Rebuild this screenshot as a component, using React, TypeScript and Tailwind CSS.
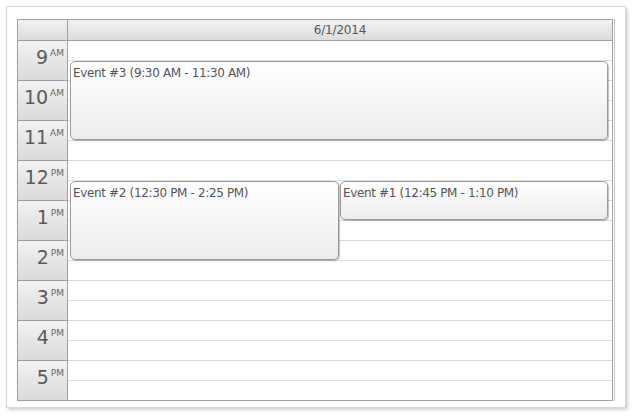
import React from "react";

const hours = [
  { h: "9", ap: "AM" },
  { h: "10", ap: "AM" },
  { h: "11", ap: "AM" },
  { h: "12", ap: "PM" },
  { h: "1", ap: "PM" },
  { h: "2", ap: "PM" },
  { h: "3", ap: "PM" },
  { h: "4", ap: "PM" },
  { h: "5", ap: "PM" },
];

// events placed on the day canvas (px offsets from top of the first hour line)
const events = [
  { text: "Event #3 (9:30 AM - 11:30 AM)", top: 21, left: 2, width: 538, height: 79 },
  { text: "Event #2 (12:30 PM - 2:25 PM)", top: 141, left: 2, width: 269, height: 79 },
  { text: "Event #1 (12:45 PM - 1:10 PM)", top: 141, left: 272, width: 268, height: 39 },
];

export default function App() {
  return (
    <div
      className="w-[636px] h-[420px] bg-white pt-[6px] pl-[6px]"
      style={{ fontFamily: '"DejaVu Sans", Verdana, sans-serif' }}
    >
      <div className="w-[620px] h-[402px] border border-[#d6d6d6] bg-white shadow-[2px_2px_3px_rgba(0,0,0,0.18)] pt-[12px] pl-[10px]">
        <div className="w-[598px] border-r border-[#c4c4c4]">
          <div className="w-[596px] border border-[#a0a0a0] flex flex-col">
            {/* header */}
            <div className="flex h-[20px]">
              <div className="w-[50px] border-r border-[#a0a0a0] bg-gradient-to-b from-[#f2f2f2] to-[#dcdcdc]" />
              <div className="flex-1 bg-gradient-to-b from-[#f2f2f2] to-[#dcdcdc] flex items-center justify-center text-[12px] tracking-[-0.2px] text-[#555]">
                6/1/2014
              </div>
            </div>
            {/* body */}
            <div className="flex">
              <div className="w-[50px] border-r border-[#a0a0a0] flex flex-col">
                {hours.map((r) => (
                  <div
                    key={r.h}
                    className="h-[40px] border-t border-[#a0a0a0] bg-gradient-to-b from-[#f3f3f3] to-[#dadada] flex justify-end items-start pr-[3px] text-[#5a5a5a]"
                  >
                    <span className="text-[19px] leading-none pt-[7px]">{r.h}</span>
                    <span className="text-[9px] leading-none pt-[8px] ml-[2px] text-[#666]">{r.ap}</span>
                  </div>
                ))}
              </div>
              <div className="flex-1 relative flex flex-col">
                {hours.map((r, i) => (
                  <div key={r.h} className={"flex flex-col h-[40px] border-t " + (i === 0 ? "border-[#a0a0a0]" : "border-[#d8d8d8]")}>
                    <div className="h-[19px]" />
                    <div className="h-[20px] border-t border-[#e2e2e2]" />
                  </div>
                ))}
                {events.map((e) => (
                  <div
                    key={e.text}
                    className="absolute rounded-[5px] border border-[#9a9a9a] bg-gradient-to-b from-white to-[#ececec] shadow-[1px_1px_1px_rgba(0,0,0,0.25)] pl-[2px] pt-[4px] text-[12px] leading-[14px] tracking-[-0.35px] text-[#555] whitespace-nowrap overflow-hidden"
                    style={{ top: e.top, left: e.left, width: e.width, height: e.height }}
                  >
                    {e.text}
                  </div>
                ))}
              </div>
            </div>
          </div>
        </div>
      </div>
    </div>
  );
}
